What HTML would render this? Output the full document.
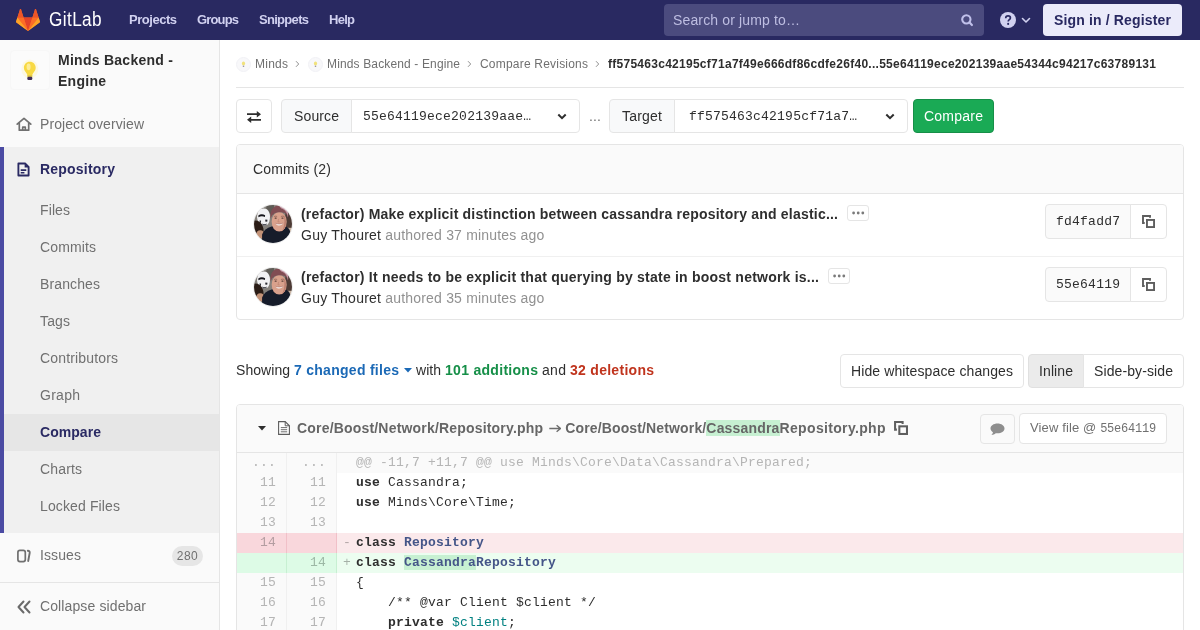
<!DOCTYPE html>
<html lang="en">
<head>
<meta charset="utf-8">
<title>Compare Revisions · Minds Backend - Engine · GitLab</title>
<style>
*{box-sizing:border-box;}
html,body{margin:0;padding:0;overflow:hidden;}
body{width:1200px;height:630px;overflow:hidden;background:#fff;color:#2e2e2e;font-family:"Liberation Sans",sans-serif;font-size:14px;line-height:20px;position:relative;}
svg{display:block;}
.a{position:absolute;white-space:nowrap;}
.mono{font-family:"Liberation Mono",monospace;font-size:13px;letter-spacing:0.1987px;}

/* ---------- top navbar ---------- */
.navbar{position:absolute;left:0;top:0;width:1200px;height:40px;background:#292961;}
.wordmark{left:49px;top:5.500px;font-size:20px;line-height:26px;color:#fff;letter-spacing:.45px;transform-origin:0 0;transform:scaleX(.86);}
.nl{top:10px;font-size:13px;font-weight:bold;line-height:20px;color:#d1d1f0;}
.search{position:absolute;left:664px;top:4px;width:320px;height:32px;border-radius:4px;background:#4b4b7e;}
.signin{position:absolute;left:1043px;top:4px;width:139px;height:32px;border-radius:4px;background:#ebebfa;color:#292961;font-weight:bold;line-height:32px;text-align:center;}

/* ---------- sidebar ---------- */
.sidebar{position:absolute;left:0;top:40px;width:220px;height:590px;background:#fafafa;box-shadow:inset -1px 0 0 #e5e5e5;}
.ctx-avatar{position:absolute;left:10px;top:10px;width:40px;height:40px;border-radius:4px;background:#fbfbfb;border:1px solid #f7f7f7;}
.ctx-title{left:58px;font-weight:bold;line-height:21px;color:#2e2e2e;}
.sb{left:40px;color:#707070;}
.sb-active{position:absolute;left:0;top:107px;width:219px;height:386px;background:#f0f0f0;box-shadow:inset 4px 0 0 #4b4ba3;}
.sb-sub-active{position:absolute;left:4px;top:374px;width:215px;height:37px;background:#e6e6e6;}
.act{color:#2a2a63;font-weight:bold;}
.badge{position:absolute;left:172px;top:506px;width:31px;height:20px;border-radius:10px;background:#e6e6e6;color:#707070;font-size:12px;line-height:20px;text-align:center;}
.sb-toggle{position:absolute;left:0;top:542px;width:219px;height:48px;border-top:1px solid #e5e5e5;background:#fafafa;}

/* ---------- content ---------- */
.content{position:absolute;left:236px;top:40px;width:948px;height:590px;}
.crumbs{position:absolute;left:0;top:0;width:948px;height:48px;border-bottom:1px solid #e5e5e5;font-size:12px;line-height:16px;color:#707070;}
.crumbs .a{top:16px;}
.crumbs .av{position:absolute;top:16.500px;width:15px;height:15px;border-radius:50%;background:#f8f8fa;border:1px solid #f1f1f5;margin-left:-.2px;}
.btn{position:absolute;height:34px;border:1px solid #e5e5e5;border-radius:4px;background:#fff;color:#2e2e2e;line-height:32px;white-space:nowrap;}
.btn .a{top:0;}
.btn .mono{top:1px !important;}

.panel{position:absolute;left:0;top:104px;width:948px;height:176px;border:1px solid #e5e5e5;border-radius:4px;background:#fff;}
.panel-h{position:absolute;left:0;top:0;width:946px;height:49px;background:#fafafa;border-bottom:1px solid #e5e5e5;border-radius:3px 3px 0 0;}
.commit{position:absolute;left:0;width:946px;}
.avatar{position:absolute;left:16px;top:10px;width:40px;height:40px;border-radius:50%;overflow:hidden;border:1px solid #ededed;}
.title{left:64px;top:10px;font-weight:bold;}
.meta{left:64px;top:31px;color:#919191;}
.dots{position:absolute;top:11px;width:22px;height:16px;border:1px solid #e5e5e5;border-radius:3px;background:#fff;}
.sha{position:absolute;left:808px;top:10px;width:86px;height:35px;border:1px solid #e5e5e5;border-radius:4px 0 0 4px;background:#fafafa;line-height:33px;}
.copy{position:absolute;left:893px;top:10px;width:37px;height:35px;border:1px solid #e5e5e5;border-radius:0 4px 4px 0;background:#fff;}

.file{position:absolute;left:0;top:364px;width:948px;height:240px;border:1px solid #e5e5e5;border-radius:4px 4px 0 0;background:#fff;}
.file-h{position:absolute;left:0;top:0;width:946px;height:48px;background:#fafafa;border-bottom:1px solid #e5e5e5;border-radius:3px 3px 0 0;}
.fname{top:13px;font-weight:bold;color:#666;}
.idiff{background:#c7f0d2;}

/* diff */
.diff{position:absolute;left:0;top:48px;width:946px;font-family:"Liberation Mono",monospace;font-size:13px;letter-spacing:0.1987px;line-height:20px;}
.row{position:relative;height:20px;width:946px;}
.ln{position:absolute;top:0;width:50px;height:20px;background:#fafafa;border-right:1px solid #f0f0f0;color:#b5b5b5;text-align:right;padding-right:10px;}
.ln.o{left:0;}.ln.n{left:50px;}
.ln i,.code i{font-style:normal;position:relative;top:0;}
.code{position:absolute;left:100px;top:0;width:846px;height:20px;padding-left:19px;white-space:pre;color:#2e2e2e;}
.code .sign{position:absolute;left:6px;top:0;color:rgba(0,0,0,.3);}
.match .code{background:#fafafa;color:#b5b5b5;}
.del .ln{background:#f9d7dc;border-color:#f1c0c8;color:#b39da1;}
.del .code{background:#fbe9eb;}
.add .ln{background:#ddfbe6;border-color:#c7f0d2;color:#9cb8a5;}
.add .code{background:#ecfdf0;}
.k{font-weight:bold;}
.nc{color:#445588;font-weight:bold;}
.nv{color:#008080;}
</style>
</head>
<body>
<div id="wrap" style="position:absolute;left:0;top:0;width:1200px;height:630px;overflow:hidden;will-change:transform;">

<!-- NAVBAR -->
<div class="navbar">
  <svg class="a" style="left:16px;top:8px" width="24" height="24" viewBox="0 0 36 36">
    <path fill="#f0632a" d="M18 34.400L.600 21.800c-.500-.300-.700-1-.500-1.500l2-6.200L6.100 1.800c.2-.6 1.100-.6 1.300 0l4 12.300h13.200l4-12.300c.2-.6 1.100-.6 1.300 0l4 12.300 2 6.200c.2.500 0 1.200-.5 1.500z"/>
    <path fill="#e24329" d="M18 34.4l6.600-20.300H11.400z"/>
    <path fill="#fc6d26" d="M18 34.4l-6.600-20.300H2.100z"/>
    <path fill="#fca326" d="M2.100 14.100l-2 6.200c-.2.500 0 1.200.5 1.500L18 34.400z"/>
    <path fill="#ec5628" d="M2.100 14.100h9.300L7.400 1.800c-.2-.6-1.100-.6-1.300 0z"/>
    <path fill="#fc6d26" d="M18 34.400l6.600-20.300h9.300z"/>
    <path fill="#fca326" d="M33.900 14.100l2 6.200c.2.500 0 1.200-.5 1.500L18 34.400z"/>
    <path fill="#ec5628" d="M33.900 14.100h-9.300l4-12.300c.2-.6 1.100-.6 1.300 0z"/>
  </svg>
  <div class="a wordmark">GitLab</div>
  <div class="a nl" style="left:129px"><span style="letter-spacing:-0.473px">Projects</span></div>
  <div class="a nl" style="left:197px"><span style="letter-spacing:-0.847px">Groups</span></div>
  <div class="a nl" style="left:259px"><span style="letter-spacing:-0.701px">Snippets</span></div>
  <div class="a nl" style="left:329px"><span style="letter-spacing:-0.724px">Help</span></div>
  <div class="search">
    <div class="a" style="left:9px;top:6px;color:#bebee2;"><span style="letter-spacing:0.147px">Search or jump to…</span></div>
    <svg class="a" style="left:296.800px;top:9.600px" width="13" height="13" viewBox="0 0 13 13"><circle cx="5.350" cy="5.350" r="4.150" fill="none" stroke="#c0c0ea" stroke-width="2.100"/><path d="M8.600 8.600l2.300 2.400" stroke="#c0c0ea" stroke-width="2.200" stroke-linecap="round"/></svg>
  </div>
  <svg class="a" style="left:1000px;top:12px" width="16" height="16" viewBox="0 0 16 16"><circle cx="8" cy="8" r="8" fill="#d1d1f0"/><path d="M5.700 6.200c0-1.400 1-2.300 2.400-2.300s2.300.8 2.300 2c0 1.700-2.200 1.700-2.200 3.500" fill="none" stroke="#292961" stroke-width="1.700"/><circle cx="8.150" cy="11.900" r="1.050" fill="#292961"/></svg>
  <svg class="a" style="left:1020.500px;top:17.400px" width="10" height="7" viewBox="0 0 10 7"><path d="M1.500 1.500L5 5l3.500-3.500" fill="none" stroke="#d1d1f0" stroke-width="1.600" stroke-linecap="round" stroke-linejoin="round"/></svg>
  <div class="signin"><span style="letter-spacing:0.155px">Sign in / Register</span></div>
</div>

<!-- SIDEBAR -->
<div class="sidebar">
  <div class="ctx-avatar">
    <svg width="38" height="38" viewBox="0 0 38 38">
      <g filter="url(#blur4)">
      <ellipse cx="18.800" cy="18" rx="8.500" ry="9.500" fill="#fdf6cf" opacity=".55"/>
      <path d="M18.800 10.800c-3.600 0-5.900 2.700-5.900 5.900 0 2.400 1.400 4 2.600 5.500.6.800.9 1.700.9 2.500h4.800c0-.8.300-1.700.9-2.500 1.200-1.500 2.600-3.100 2.600-5.500 0-3.200-2.300-5.900-5.900-5.900z" fill="#f8d943"/>
      <ellipse cx="17.600" cy="15.800" rx="2" ry="3.400" fill="#fdec95"/>
      <rect x="16.300" y="24.300" width="5" height="1.600" fill="#d9bf3c"/>
      <rect x="16.300" y="25.700" width="5" height="3.300" rx="1.300" fill="#3f2d57"/>
      </g>
    </svg>
  </div>
  <div class="a ctx-title" style="top:10px"><span style="letter-spacing:0.268px">Minds Backend -</span></div>
  <div class="a ctx-title" style="top:31px"><span style="letter-spacing:0.266px">Engine</span></div>

  <svg class="a" style="left:16px;top:77px" width="16" height="15" viewBox="0 0 16 15"><path d="M1.200 7.200L8 1.300l6.800 5.900M3.300 6.200v7h9.400v-7M6.700 13.200v-3h2.600v3" fill="none" stroke="#707070" stroke-width="1.700" stroke-linejoin="round" stroke-linecap="round"/></svg>
  <div class="a sb" style="top:74px"><span style="letter-spacing:0.086px">Project overview</span></div>

  <div class="sb-active"></div>
  <svg class="a" style="left:17.200px;top:122.300px" width="13" height="15" viewBox="0 0 14 16"><path d="M1.500 1.500h7.200l3.800 3.800v9.200h-11z" fill="none" stroke="#2a2a63" stroke-width="2" stroke-linejoin="round"/><path d="M8.200 1.500v4.300h4.300z" fill="#2a2a63"/><path d="M4 8.700h6M4 11.500h4" stroke="#2a2a63" stroke-width="1.700"/></svg>
  <div class="a sb act" style="top:119px"><span style="letter-spacing:0.208px">Repository</span></div>
  <div class="sb-sub-active"></div>
  <div class="a sb" style="top:160px"><span style="letter-spacing:0.109px">Files</span></div>
  <div class="a sb" style="top:197px"><span style="letter-spacing:0.128px">Commits</span></div>
  <div class="a sb" style="top:234px"><span style="letter-spacing:0.121px">Branches</span></div>
  <div class="a sb" style="top:271px"><span style="letter-spacing:0.141px">Tags</span></div>
  <div class="a sb" style="top:308px"><span style="letter-spacing:0.158px">Contributors</span></div>
  <div class="a sb" style="top:345px"><span style="letter-spacing:0.270px">Graph</span></div>
  <div class="a sb act" style="top:382px"><span style="letter-spacing:0.052px">Compare</span></div>
  <div class="a sb" style="top:419px"><span style="letter-spacing:0.153px">Charts</span></div>
  <div class="a sb" style="top:456px"><span style="letter-spacing:0.128px">Locked Files</span></div>

  <svg class="a" style="left:16px;top:508px" width="16" height="16" viewBox="0 0 16 16"><rect x="1.900" y="2.400" width="7.400" height="11.200" rx="2" fill="none" stroke="#707070" stroke-width="1.700"/><path d="M11.800 2.700c1.500.1 2.100.9 1.900 2.100l-1.500 8.200" fill="none" stroke="#707070" stroke-width="1.900" stroke-linecap="round"/></svg>
  <div class="a sb" style="top:505px"><span style="letter-spacing:0.106px">Issues</span></div>
  <div class="badge"><span style="letter-spacing:0.484px">280</span></div>

  <div class="sb-toggle">
    <svg class="a" style="left:17px;top:17px" width="14" height="14" viewBox="0 0 14 14"><path d="M6.500 1.500L1.500 7l5 5.500M12.500 1.500L7.500 7l5 5.500" fill="none" stroke="#6a6a6a" stroke-width="2" stroke-linecap="round" stroke-linejoin="round"/></svg>
    <div class="a sb" style="top:13px"><span style="letter-spacing:0.114px">Collapse sidebar</span></div>
  </div>
</div>

<!-- CONTENT -->
<div class="content">
  <div class="crumbs">
    <div class="av" style="left:0"><svg width="13" height="13" viewBox="0.500 0.500 13 13"><use href="#minibulb"/></svg></div>
    <div class="a" style="left:19px"><span style="letter-spacing:0.246px">Minds</span></div>
    <svg class="a" style="left:59px;top:20px" width="5" height="8" viewBox="0 0 5 8"><use href="#crumbsep"/></svg>
    <div class="av" style="left:72px"><svg width="13" height="13" viewBox="0.500 0.500 13 13"><use href="#minibulb"/></svg></div>
    <div class="a" style="left:91px"><span style="letter-spacing:0.139px">Minds Backend - Engine</span></div>
    <svg class="a" style="left:231px;top:20px" width="5" height="8" viewBox="0 0 5 8"><use href="#crumbsep"/></svg>
    <div class="a" style="left:244px"><span style="letter-spacing:0.205px">Compare Revisions</span></div>
    <svg class="a" style="left:359px;top:20px" width="5" height="8" viewBox="0 0 5 8"><use href="#crumbsep"/></svg>
    <div class="a" style="left:372px;color:#2e2e2e;font-weight:bold;"><span style="letter-spacing:0.270px">ff575463c42195cf71a7f49e666df86cdfe26f40...55e64119ece202139aae54344c94217c63789131</span></div>
  </div>

  <!-- compare form -->
  <div class="btn" style="left:0;top:59px;width:36px;">
    <svg class="a" style="left:10px;top:11px" width="14" height="12" viewBox="0 0 14 12"><path d="M0 3.200h10.500M14 8.800H3.500" stroke="#2e2e2e" stroke-width="1.700" fill="none"/><path d="M9.800 0l4.200 3.200-4.200 3.200zM4.200 5.600L0 8.800 4.200 12z" fill="#2e2e2e"/></svg>
  </div>
  <div class="btn" style="left:45px;top:59px;width:71px;background:#f8f9fa;border-radius:4px 0 0 4px;"><div class="a" style="left:12px"><span style="letter-spacing:0.128px">Source</span></div></div>
  <div class="btn" style="left:115px;top:59px;width:229px;border-radius:0 4px 4px 0;">
    <div class="a mono" style="left:11px"><span style="letter-spacing:0.209px">55e64119ece202139aae…</span></div>
    <svg class="a" style="left:205px;top:13px" width="10" height="7" viewBox="0 0 10 7"><use href="#chev"/></svg>
  </div>
  <div class="a" style="left:353px;top:66px;color:#707070;"><span style="letter-spacing:0.164px">...</span></div>
  <div class="btn" style="left:373px;top:59px;width:66px;background:#f8f9fa;border-radius:4px 0 0 4px;"><div class="a" style="left:12px"><span style="letter-spacing:0.216px">Target</span></div></div>
  <div class="btn" style="left:438px;top:59px;width:234px;border-radius:0 4px 4px 0;">
    <div class="a mono" style="left:14px"><span style="letter-spacing:0.209px">ff575463c42195cf71a7…</span></div>
    <svg class="a" style="left:210px;top:13px" width="10" height="7" viewBox="0 0 10 7"><use href="#chev"/></svg>
  </div>
  <div class="btn" style="left:677px;top:59px;width:81px;background:#1aaa55;border-color:#168f48;color:#fff;"><div class="a" style="left:10px"><span style="letter-spacing:0.234px">Compare</span></div></div>

  <!-- commits panel -->
  <div class="panel">
    <div class="panel-h"><div class="a" style="left:16px;top:14px"><span style="letter-spacing:0.177px">Commits (2)</span></div></div>
    <div class="commit" style="top:49px;height:62px;">
      <div class="avatar"><svg width="38" height="38" viewBox="0 0 40 40"><use href="#face"/></svg></div>
      <div class="a title"><span style="letter-spacing:0.209px">(refactor) Make explicit distinction between cassandra repository and elastic...</span></div>
      <div class="dots" style="left:610px"><svg width="20" height="14" viewBox="0 0 20 14"><use href="#dots3"/></svg></div>
      <div class="a meta"><span style="color:#2e2e2e"><span style="letter-spacing:0.244px">Guy Thouret</span></span><span style="letter-spacing:0.183px"> authored 37 minutes ago</span></div>
      <div class="sha"><div class="a mono" style="left:10px;top:0"><span style="letter-spacing:0.225px">fd4fadd7</span></div></div>
      <div class="copy"><svg class="a" style="left:11px;top:10px" width="13" height="13" viewBox="0 0 13 13"><use href="#copyi"/></svg></div>
    </div>
    <div class="commit" style="top:111px;height:64px;border-top:1px solid #f0f0f0;">
      <div class="avatar"><svg width="38" height="38" viewBox="0 0 40 40"><use href="#face"/></svg></div>
      <div class="a title"><span style="letter-spacing:0.225px">(refactor) It needs to be explicit that querying by state in boost network is...</span></div>
      <div class="dots" style="left:591px"><svg width="20" height="14" viewBox="0 0 20 14"><use href="#dots3"/></svg></div>
      <div class="a meta"><span style="color:#2e2e2e"><span style="letter-spacing:0.244px">Guy Thouret</span></span><span style="letter-spacing:0.183px"> authored 35 minutes ago</span></div>
      <div class="sha"><div class="a mono" style="left:10px;top:0"><span style="letter-spacing:0.225px">55e64119</span></div></div>
      <div class="copy"><svg class="a" style="left:11px;top:10px" width="13" height="13" viewBox="0 0 13 13"><use href="#copyi"/></svg></div>
    </div>
  </div>

  <!-- showing -->
  <div class="a" style="left:0;top:320px"><span style="letter-spacing:0.049px">Showing</span></div>
  <div class="a" style="left:58px;top:320px;color:#1b69b6;font-weight:bold;"><span style="letter-spacing:0.275px">7 changed files</span></div>
  <svg class="a" style="left:168px;top:328px" width="8" height="5" viewBox="0 0 8 5"><path d="M0 0h8L4 4.600z" fill="#1b69b6"/></svg>
  <div class="a" style="left:180px;top:320px"><span style="letter-spacing:0.031px">with</span></div>
  <div class="a" style="left:209px;top:320px;color:#168f48;font-weight:bold;"><span style="letter-spacing:0.294px">101 additions</span></div>
  <div class="a" style="left:306px;top:320px"><span style="letter-spacing:0.320px">and</span></div>
  <div class="a" style="left:334px;top:320px;color:#c0341d;font-weight:bold;"><span style="letter-spacing:0.280px">32 deletions</span></div>
  <div class="btn" style="left:604px;top:314px;width:184px;"><div class="a" style="left:10px"><span style="letter-spacing:0.112px">Hide whitespace changes</span></div></div>
  <div class="btn" style="left:792px;top:314px;width:56px;border-radius:4px 0 0 4px;background:#ebebeb;border-color:#e0e0e0;"><div class="a" style="left:10px"><span style="letter-spacing:0.106px">Inline</span></div></div>
  <div class="btn" style="left:847px;top:314px;width:101px;border-radius:0 4px 4px 0;"><div class="a" style="left:10px"><span style="letter-spacing:0.107px">Side-by-side</span></div></div>

  <!-- file -->
  <div class="file">
    <div class="file-h">
      <svg class="a" style="left:21px;top:21px" width="8" height="5" viewBox="0 0 8 5"><path d="M0 0h8L4 4.600z" fill="#2e2e2e"/></svg>
      <svg class="a" style="left:41px;top:16px" width="12" height="14" viewBox="0 0 12 14"><path d="M.600 .600h6.600l4.200 4.200v8.600H.600z" fill="#fff" stroke="#5c5c5c" stroke-width="1.100"/><path d="M7.200 .600v4.200h4.200" fill="none" stroke="#5c5c5c" stroke-width="1"/><path d="M2.800 6.600h6.400M2.800 8.700h6.400M2.800 10.800h6.400" stroke="#5c5c5c" stroke-width=".9"/></svg>
      <div class="a fname" style="left:60px"><span style="letter-spacing:0.185px">Core/Boost/Network/Repository.php</span><svg style="display:inline-block;vertical-align:top;margin:6px 4px 0 5.500px" width="12.500" height="9" viewBox="0 0 12.500 9"><path d="M.300 4.500h11M7.600 1.200l3.900 3.300-3.900 3.300" fill="none" stroke="#6c6c6c" stroke-width="1.350"/></svg><span style="letter-spacing:0.141px">Core/Boost/Network/</span><span class="idiff"><span style="letter-spacing:0.176px">Cassandra</span></span><span style="letter-spacing:0.334px">Repository.php</span></div>
      <svg class="a" style="left:657px;top:16px" width="14" height="14" viewBox="0 0 13 13"><use href="#copyi"/></svg>
      <div class="btn" style="left:743px;top:9px;width:35px;height:30px;background:#fafafa;">
        <svg class="a" style="left:9px;top:8px" width="15" height="13" viewBox="0 0 15 13"><path d="M7.500 .500C3.600 .500 .500 2.700 .500 5.400c0 1.500 1 2.900 2.500 3.800-.2 1-.8 2-1.600 2.700 1.700-.1 3.200-.7 4.300-1.700.6.100 1.200.1 1.800.1 3.900 0 7-2.200 7-4.900S11.400 .500 7.500 .500z" fill="#8e8e8e"/></svg>
      </div>
      <div class="btn" style="left:782px;top:8px;width:148px;height:31px;font-size:13px;line-height:27px;color:#707070;"><div class="a" style="left:10px"><span style="letter-spacing:0.128px">View file @ </span><span style="font-family:'Liberation Mono',monospace;font-size:12px;"><span style="letter-spacing:-0.230px">55e64119</span></span></div></div>
    </div>
    <div class="diff">
      <div class="row match"><div class="ln o"><i>...</i></div><div class="ln n"><i>...</i></div><div class="code"><i>@@ -11,7 +11,7 @@ use Minds\Core\Data\Cassandra\Prepared;</i></div></div>
      <div class="row"><div class="ln o"><i>11</i></div><div class="ln n"><i>11</i></div><div class="code"><i><span class="k">use</span> Cassandra;</i></div></div>
      <div class="row"><div class="ln o"><i>12</i></div><div class="ln n"><i>12</i></div><div class="code"><i><span class="k">use</span> Minds\Core\Time;</i></div></div>
      <div class="row"><div class="ln o"><i>13</i></div><div class="ln n"><i>13</i></div><div class="code"></div></div>
      <div class="row del"><div class="ln o"><i>14</i></div><div class="ln n"></div><div class="code"><span class="sign">-</span><i><span class="k">class</span> <span class="nc">Repository</span></i></div></div>
      <div class="row add"><div class="ln o"></div><div class="ln n"><i>14</i></div><div class="code"><span class="sign">+</span><i><span class="k">class</span> <span class="nc"><span class="idiff">Cassandra</span>Repository</span></i></div></div>
      <div class="row"><div class="ln o"><i>15</i></div><div class="ln n"><i>15</i></div><div class="code"><i>{</i></div></div>
      <div class="row"><div class="ln o"><i>16</i></div><div class="ln n"><i>16</i></div><div class="code"><i>    /** @var Client $client */</i></div></div>
      <div class="row"><div class="ln o"><i>17</i></div><div class="ln n"><i>17</i></div><div class="code"><i>    <span class="k">private</span> <span class="nv">$client</span>;</i></div></div>
    </div>
  </div>
</div>

</div>
<!-- shared symbols -->
<svg width="0" height="0" style="position:absolute">
  <defs>
    <filter id="blur4" x="-20%" y="-20%" width="140%" height="140%"><feGaussianBlur stdDeviation="0.6"/></filter>
    <filter id="blur7" x="-10%" y="-10%" width="120%" height="120%"><feGaussianBlur stdDeviation="0.55"/></filter>
    <g id="crumbsep"><path d="M1 1.200l2.700 2.800L1 6.800" fill="none" stroke="#909090" stroke-width="1"/></g>
    <g id="chev"><path d="M1.300 1.500L5 5.200l3.700-3.700" fill="none" stroke="#2e2e2e" stroke-width="2"/></g>
    <g id="dots3"><circle cx="5.600" cy="7" r="1.400" fill="#7a7a7a"/><circle cx="10.200" cy="7" r="1.400" fill="#7a7a7a"/><circle cx="14.800" cy="7" r="1.400" fill="#7a7a7a"/></g>
    <g id="minibulb"><ellipse cx="7" cy="6" rx="1.600" ry="2.100" fill="#f1e27c"/><rect x="6.300" y="8.100" width="1.400" height="1.400" fill="#a09aa6"/></g>
    <g id="copyi"><path d="M2.700 8H1V1h7v1.700" fill="none" stroke="#5e5e5e" stroke-width="1.900"/><rect x="4.950" y="4.950" width="7.100" height="7.100" fill="none" stroke="#5e5e5e" stroke-width="1.900"/></g>
    <g id="face" filter="url(#blur7)">
      <rect x="-2" y="-2" width="44" height="44" fill="#85817c"/>
      <path d="M13 -2h8v12h-8z" fill="#5e5b56"/>
      <rect x="33" y="-2" width="10" height="44" fill="#4d3a36"/>
      <path d="M35 24h6v6h-6z" fill="#c9b5a4"/>
      <path d="M3.200 13c0-6 3-9.400 7-9.400 4.200 0 6.600 3.600 6.600 8.400 0 4-1 6.500-2.200 8.300-1.200 1.400-3.600 1.400-5.400 .700C5.500 19.500 3.200 17 3.200 13z" fill="#f1f1f3"/>
      <path d="M4.500 11c2.200-1.500 5-1.500 7.200-.200l-.200 1.700c-2.200-1-4.600-1-6.800 .300z" fill="#16161a"/>
      <path d="M12 15.200l2.200 .300-.300 2.200-2.100-.400zM6 16l1.500 .500-.300 2.500-1.400-.800z" fill="#2a2a30"/>
      <path d="M8.500 19.500c1.500 .800 3.500 .800 5 0l-.500 1.800c-1.300 .500-2.800 .500-4 0z" fill="#55555c"/>
      <path d="M-1 17c3-1.500 7 0 9 3 1.800 2.800 2.500 6.500 2 10-.5 2-2 3-4 3H-1z" fill="#2b1d18"/>
      <ellipse cx="6.600" cy="31" rx="4" ry="4.300" fill="#c39378"/>
      <path d="M8.500 42V31c1.500-4.500 5-7 10-8.500l4-1h8l3 1c3 1.500 4.500 3.500 5 7V42z" fill="#161a2a"/>
      <path d="M20.500 24.500c2 3.600 9.500 3.600 12 0l-1.500-3h-9z" fill="#bb8573"/>
      <ellipse cx="26.500" cy="17.600" rx="7.900" ry="10.300" fill="#d9a18c"/>
      <path d="M31 10c2.500 3 3.600 8 2 13-1 2.500-2.500 4-4 5 2-3 3-7 3-11 0-3-.3-5-1-7z" fill="#bd8170"/>
      <path d="M17.600 14.500c-1.600-8.500 3-14.300 9.400-14.300 6.500 0 10.300 5 8.800 13.300-.8-3.800-2.500-6-8.800-6-5.500 0-8.200 2.200-9.400 7z" fill="#814e53"/>
      <path d="M27 .200c5.600 0 10 4.500 8.800 13-.6-4.500-2.800-8-6-9.200-1.200-.5-2.800-1.500-2.800-3.800z" fill="#c79dab"/>
      <path d="M22.800 19.200c2.300 1 5.600 1 7.800-.200-.5 3.200-7 3.600-7.800 .200z" fill="#f6ece8"/>
      <path d="M22.800 19.200c2.300 1 5.600 1 7.800-.200" fill="none" stroke="#9a5a50" stroke-width=".5"/>
      <ellipse cx="22.800" cy="13.800" rx="1.300" ry=".7" fill="#4f352f"/><ellipse cx="30" cy="13.800" rx="1.300" ry=".7" fill="#4f352f"/>
      <path d="M21 12.300c1-.7 2.400-.7 3.400 0M28.300 12.300c1-.7 2.400-.7 3.400 0" stroke="#6d463f" stroke-width=".6" fill="none"/>
      <path d="M26 14.500l-.8 3.200h1.800" stroke="#b87d6c" stroke-width=".6" fill="none"/>
    </g>
  </defs>
</svg>
</body>
</html>
